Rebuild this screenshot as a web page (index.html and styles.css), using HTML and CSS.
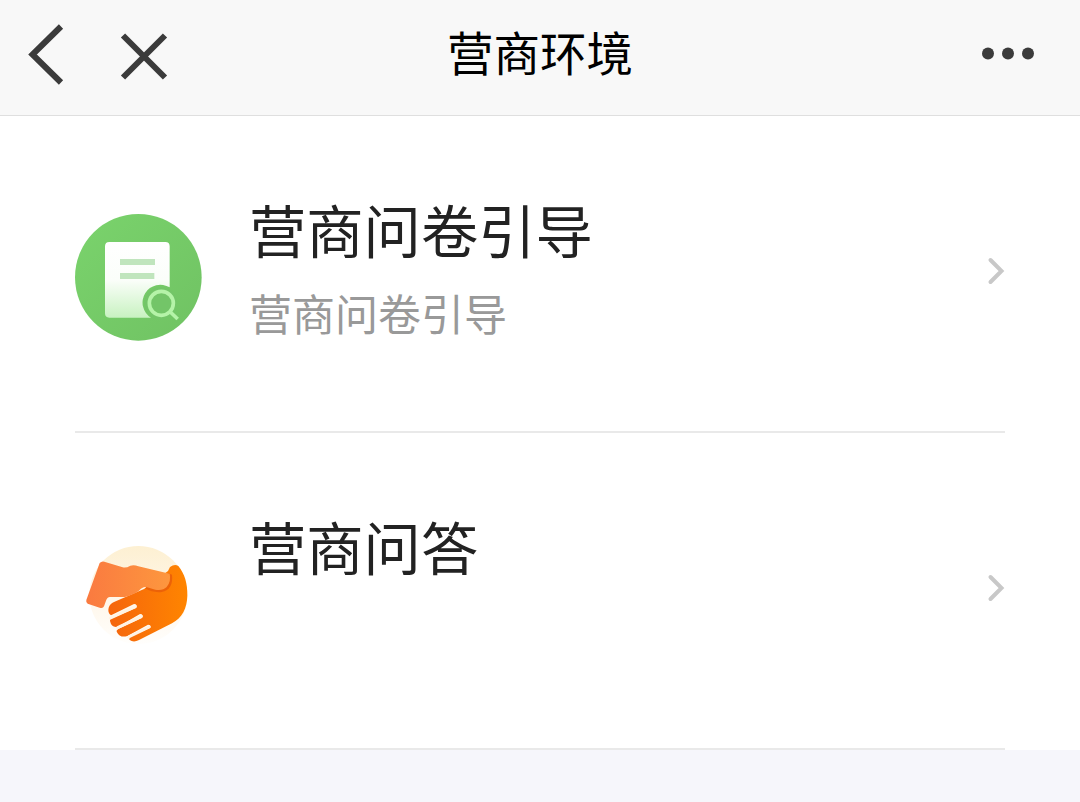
FILE: index.html
```html
<!DOCTYPE html>
<html lang="zh-CN">
<head>
<meta charset="utf-8">
<title>营商环境</title>
<link rel="stylesheet" href="styles.css">
</head>
<body>
<header class="nav">
  <div class="nav-left">
    <svg class="nav-icon" width="200" height="110" viewBox="0 0 200 110"><path d="M61 26.500L32.500 54.500L61 82.500M123 35.500L165 77.500M165 35.500L123 77.500"/></svg>
  </div>
  <h1 class="nav-title">营商环境</h1>
  <div class="nav-right">
    <svg width="54" height="14" viewBox="0 0 54 14" fill="#3b3b3b"><circle cx="7" cy="6.500" r="6"/><circle cx="27" cy="6.500" r="6"/><circle cx="47" cy="6.500" r="6"/></svg>
  </div>
</header>
<main class="list">
  <a class="row">
    <svg class="row-icon" viewBox="45 42 381 381">
      <defs>
        <linearGradient id="green" x1="0" y1="0" x2="1" y2="1"><stop offset="0" stop-color="#7ad36c"/><stop offset="1" stop-color="#70c263"/></linearGradient>
        <linearGradient id="paper" x1="0" y1="0" x2="0" y2="1"><stop offset="0" stop-color="#fff"/><stop offset=".5" stop-color="#fbfefa"/><stop offset="1" stop-color="#c8f2c1"/></linearGradient>
      </defs>
      <circle cx="235" cy="232" r="190" fill="url(#green)"/>
      <path d="M148 126H316Q329 126 329 139V262A47 47 0 0 0 273 353H148Q135 353 135 340V139Q135 126 148 126Z" fill="url(#paper)"/>
      <path d="M180 177H285V195H180ZM180 219H283V237H180Z" fill="#c0e5bd"/>
      <circle cx="302" cy="310" r="49" fill="#73c568"/>
      <g fill="none" stroke="#b5f3a8" stroke-width="11"><circle cx="304" cy="310" r="36"/><path d="M331 336L353 357"/></g>
    </svg>
    <div class="row-text"><h2 class="row-title">营商问卷引导</h2><p class="row-note">营商问卷引导</p></div>
    <svg class="chevron" width="20" height="30" viewBox="0 0 20 30"><path d="M5.500 4L16.500 15L5.500 26"/></svg>
  </a>
  <a class="row">
    <svg class="row-icon" viewBox="15 0 381 381">
      <defs>
        <linearGradient id="arm" x1="0" y1="0" x2="1" y2="0"><stop offset="0" stop-color="#fa7a40"/><stop offset="1" stop-color="#fd973e"/></linearGradient>
        <linearGradient id="hand" x1="0" y1="0" x2="1" y2="0"><stop offset="0" stop-color="#f5650d"/><stop offset="1" stop-color="#ff8500"/></linearGradient>
        <linearGradient id="halo" x1="0" y1="0" x2="0" y2="1"><stop offset="0" stop-color="#fdf0d2"/><stop offset=".5" stop-color="#fff6e8"/><stop offset="1" stop-color="#fffefc"/></linearGradient>
      </defs>
      <circle cx="205" cy="192" r="147" fill="url(#halo)"/>
      <path d="M300 108Q314 98 325 105C344 128 353 157 352 194C351 232 337 260 306 277L207 327Q190 336 178 326Q176 320 184 315L238 292Q246 282 234 281L172 315Q150 322 140 302Q138 297 146 293L216 261Q222 250 210 249L144 287Q125 292 120 270Q118 265 126 262L198 231Q204 220 192 219L123 253Q112 246 116 230Q120 218 132 213L222 174L294 120Z" fill="url(#hand)"/>
      <g fill="none" stroke="#fff3e4" stroke-width="9" stroke-linecap="round"><path d="M122 261L196 227M143 290L214 256M176 318L238 288"/></g>
      <path d="M225 172Q249 186 275 183Q311 175 306 131L294 126Z" fill="#ec6208"/>
      <path d="M89 96Q94 90 103 92L158 109Q168 112 181 104Q193 101 205 106L299 128Q304 151 290 168Q278 180 256 176L229 168Q218 166 207 179Q191 191 165 198L120 198Q111 199 108 209L102 226Q99 233 89 230L53 218Q47 215 49 207Z" fill="url(#arm)"/>
    </svg>
    <div class="row-text"><h2 class="row-title">营商问答</h2></div>
    <svg class="chevron" width="20" height="30" viewBox="0 0 20 30"><path d="M5.500 4L16.500 15L5.500 26"/></svg>
  </a>
</main>
</body>
</html>
```
FILE: styles.css
```css
* { box-sizing: border-box; }
body {
  margin: 0;
  height: 802px;
  overflow: hidden;
  background: #f6f6fb;
  font-family: "Noto Sans CJK SC", sans-serif;
}
h1, h2, p { margin: 0; font-weight: 400; white-space: nowrap; }
svg { display: block; }
.nav {
  display: grid;
  grid-template-columns: 200px 1fr 200px;
  height: 116px;
  background: #f8f8f8;
  border-bottom: 1px solid #dfdfdf;
}
.nav-icon { fill: none; stroke: #3b3b3b; stroke-width: 6; }
.nav-title {
  padding-top: 17px;
  text-align: center;
  font-size: 46.5px;
  line-height: 68px;
  color: #000;
}
.nav-right { display: flex; justify-content: flex-end; padding: 47px 45px 0 0; }
.list { height: 634px; padding: 0 75px; background: #fff; }
.row {
  display: grid;
  grid-template-columns: 127px 1fr 20px;
  column-gap: 47px;
  align-items: start;
  height: 317px;
  border-bottom: 2px solid #e9e9e9;
}
.row-icon { width: 127px; height: 127px; margin-top: 98px; }
.row-text { padding-top: 78px; }
.row-title { font-size: 57.3px; line-height: 70px; color: #222; }
.row-note { margin-top: 22px; font-size: 43px; line-height: 52px; color: #999; }
.chevron {
  margin-top: 140px;
  fill: none;
  stroke: #c8c8c8;
  stroke-width: 4;
  stroke-linecap: round;
}
```
